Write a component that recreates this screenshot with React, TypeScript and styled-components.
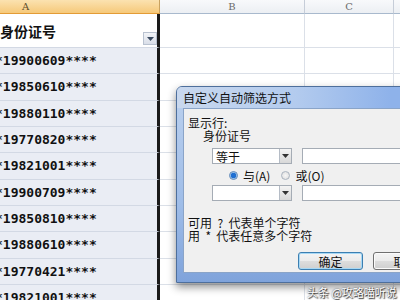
import React from "react";
import styled, { createGlobalStyle } from "styled-components";

const GlobalStyle = createGlobalStyle`
  html, body {
    margin: 0;
    padding: 0;
    background: #ffffff;
    overflow: hidden;
  }
  body {
    width: 400px;
    height: 300px;
    font-family: "Liberation Sans", "Noto Sans CJK SC", sans-serif;
  }
`;

const cjk = `"Noto Sans CJK SC", "Liberation Sans", sans-serif`;

const Page = styled.div`
  position: relative;
  width: 400px;
  height: 300px;
  overflow: hidden;
`;

const Sheet = styled.div`
  display: flex;
  flex-direction: column;
  width: 480px;
`;

const HeaderRow = styled.div`
  display: flex;
  height: 14px;
`;

const ColHeader = styled.div<{ w: number; active?: boolean }>`
  box-sizing: border-box;
  width: ${({ w }) => w}px;
  flex-shrink: 0;
  height: 14px;
  display: flex;
  align-items: center;
  justify-content: ${({ active }) => (active ? "flex-start" : "center")};
  padding-left: ${({ active }) => (active ? "22px" : "0")};
  font-family: "DejaVu Serif", "Liberation Serif", serif;
  font-size: 10px;
  color: ${({ active }) => (active ? "#5a4a2a" : "#6a6a6a")};
  background: ${({ active }) =>
    active
      ? "linear-gradient(#fbe2b0, #f6c97a)"
      : "linear-gradient(#f8f9fb, #eceff3)"};
  border-right: 1px solid ${({ active }) => (active ? "#c9a25f" : "#c6cdd8")};
  border-bottom: 1px solid ${({ active }) => (active ? "#e39b35" : "#a8b9cd")};
`;

const Row = styled.div<{ h: number }>`
  display: flex;
  height: ${({ h }) => h}px;
  flex-shrink: 0;
`;

const IdCell = styled.div<{ head?: boolean }>`
  position: relative;
  box-sizing: border-box;
  width: 160px;
  flex-shrink: 0;
  display: flex;
  align-items: center;
  background: ${({ head }) => (head ? "#ffffff" : "#eaedf4")};
  border-bottom: 1px solid #d3d9e4;
  border-right: 3px solid #1a1a1a;
  white-space: nowrap;
  overflow: hidden;
  font-family: ${({ head }) => (head ? cjk : `"DejaVu Sans Mono", "Liberation Mono", monospace`)};
  font-weight: bold;
  font-size: ${({ head }) => (head ? "14px" : "13px")};
  color: #111;
`;

const IdText = styled.span`
  margin-left: -5px;
`;

const Cell = styled.div<{ w: number }>`
  box-sizing: border-box;
  width: ${({ w }) => w}px;
  flex-shrink: 0;
  background: #ffffff;
  border-bottom: 1px solid #dbe0e8;
  border-right: 1px solid #dbe0e8;
`;

const FilterButton = styled.div`
  position: absolute;
  right: 0;
  bottom: 2px;
  width: 14px;
  height: 13px;
  box-sizing: border-box;
  border: 1px solid #b9c2d0;
  background: linear-gradient(#f2f4f8, #d9dee8);
  display: flex;
  align-items: center;
  justify-content: center;
`;

const Dialog = styled.div`
  position: absolute;
  left: 176px;
  top: 86px;
  width: 240px;
  height: 197px;
  box-sizing: border-box;
  display: flex;
  flex-direction: column;
  border: 1px solid #4e6f9c;
  border-radius: 6px 6px 0 0;
  background: linear-gradient(180deg, #bcd1ee 0%, #9fbde8 60%, #7fa3db 100%);
  box-shadow: 0 4px 8px rgba(0, 0, 0, 0.45);
`;

const TitleBar = styled.div`
  height: 21px;
  display: flex;
  align-items: center;
  padding-left: 6px;
  background: linear-gradient(90deg, #c9d8ee 0%, #b3cbee 50%, #8eb2ea 90%);
  border-radius: 5px 5px 0 0;
  font-family: ${cjk};
  font-size: 12px;
  color: #111;
`;

const HelpButton = styled.div`
  position: absolute;
  right: 0;
  top: -1px;
  width: 15px;
  height: 14px;
  box-sizing: border-box;
  border: 1px solid #6c86a8;
  border-radius: 0 5px 3px 3px;
  background: linear-gradient(#e6edf6, #aebfd6);
  font-family: "Liberation Sans", sans-serif;
  font-size: 11px;
  font-weight: bold;
  color: #2c3e56;
  display: flex;
  align-items: center;
  justify-content: center;
`;

const Body = styled.div`
  flex: 1;
  margin: 0 0 9px 6px;
  box-sizing: border-box;
  background: #f0f0f0;
  border: 1px solid #8aa4c8;
  display: flex;
  flex-direction: column;
  padding: 7px 0 0 4px;
  font-family: ${cjk};
  font-size: 12px;
  color: #111;
`;

const Label = styled.div<{ indent?: number }>`
  height: 13px;
  line-height: 13px;
  padding-left: ${({ indent }) => indent ?? 0}px;
  white-space: pre;
`;

const FieldRow = styled.div<{ top: number }>`
  display: flex;
  align-items: center;
  margin-top: ${({ top }) => top}px;
  padding-left: 24px;
  gap: 10px;
`;

const Combo = styled.div`
  width: 80px;
  height: 16px;
  box-sizing: border-box;
  border: 1px solid #a5acb5;
  background: #fff;
  display: flex;
  align-items: center;
  justify-content: space-between;
  padding-left: 3px;
  font-size: 12px;
`;

const ComboArrow = styled.div`
  width: 12px;
  height: 14px;
  box-sizing: border-box;
  border-left: 1px solid #b5bcc6;
  background: linear-gradient(#f4f4f4, #d8d8d8);
  display: flex;
  align-items: center;
  justify-content: center;
`;

const TextField = styled.div`
  flex: 1;
  height: 16px;
  box-sizing: border-box;
  border: 1px solid #a5acb5;
  border-right: none;
  background: #fff;
`;

const RadioRow = styled.div`
  display: flex;
  align-items: center;
  margin-top: 4px;
  padding-left: 41px;
  height: 14px;
  gap: 3px;
`;

const Radio = styled.span<{ checked?: boolean }>`
  width: 9px;
  height: 9px;
  border-radius: 50%;
  box-sizing: border-box;
  border: 1px solid ${({ checked }) => (checked ? "#5b86b8" : "#a9b3bf")};
  background: ${({ checked }) =>
    checked
      ? "radial-gradient(circle, #1f6fd1 0 2.5px, #8fbbe8 3px, #eef4fb 4px)"
      : "radial-gradient(circle, #f6f6f6, #dcdcdc)"};
  margin-right: 2px;
`;

const RadioText = styled.span`
  margin-right: 8px;
  font-size: 12px;
`;

const Hints = styled.div`
  margin-top: 15px;
  display: flex;
  flex-direction: column;
`;

const ButtonRow = styled.div`
  display: flex;
  gap: 10px;
  margin-top: 10px;
  padding-left: 110px;
`;

const DialogButton = styled.div<{ primary?: boolean }>`
  width: 65px;
  height: 18px;
  box-sizing: border-box;
  border: 1px solid ${({ primary }) => (primary ? "#3c7fb1" : "#707070")};
  border-radius: 3px;
  background: linear-gradient(#f4f4f4 0%, #ebebeb 50%, #dddddd 51%, #cfcfcf 100%);
  box-shadow: ${({ primary }) => (primary ? "inset 0 0 0 1px #a7d8f5" : "inset 0 0 0 1px #fbfbfb")};
  display: flex;
  align-items: center;
  justify-content: center;
  font-size: 12px;
  flex-shrink: 0;
`;

const Watermark = styled.div`
  position: absolute;
  left: 307px;
  top: 284px;
  font-family: ${cjk};
  font-size: 11px;
  color: #ffffff;
  text-shadow: 0 0 2px #333, 1px 1px 1px #333;
  white-space: nowrap;
`;

const DownArrow = ({ color = "#333" }: { color?: string }) => (
  <svg width="7" height="4" viewBox="0 0 7 4">
    <polygon points="0,0 7,0 3.5,4" fill={color} />
  </svg>
);

const ids = [
  "*19900609****",
  "*19850610****",
  "*19880110****",
  "*19770820****",
  "*19821001****",
  "*19900709****",
  "*19850810****",
  "*19880610****",
  "*19770421****",
  "*19821001****",
];

const App = () => {
  return (
    <Page>
      <GlobalStyle />
      <Sheet>
        <HeaderRow>
          <ColHeader w={160} active>A</ColHeader>
          <ColHeader w={145}>B</ColHeader>
          <ColHeader w={89}>C</ColHeader>
          <ColHeader w={90}></ColHeader>
        </HeaderRow>
        <Row h={34}>
          <IdCell head>
            身份证号
            <FilterButton>
              <DownArrow color="#3a4a60" />
            </FilterButton>
          </IdCell>
          <Cell w={145} />
          <Cell w={89} />
          <Cell w={90} />
        </Row>
        {ids.map((id, i) => (
          <Row h={26.33} key={i + "row"}>
            <IdCell>
              <IdText>{id}</IdText>
            </IdCell>
            <Cell w={145} />
            <Cell w={89} />
            <Cell w={90} />
          </Row>
        ))}
      </Sheet>

      <Dialog>
        <TitleBar>自定义自动筛选方式</TitleBar>
        <HelpButton>?</HelpButton>
        <Body>
          <Label>显示行:</Label>
          <Label indent={15}>身份证号</Label>
          <FieldRow top={6}>
            <Combo>
              等于
              <ComboArrow>
                <DownArrow />
              </ComboArrow>
            </Combo>
            <TextField />
          </FieldRow>
          <RadioRow>
            <Radio checked />
            <RadioText>与(A)</RadioText>
            <Radio />
            <RadioText>或(O)</RadioText>
          </RadioRow>
          <FieldRow top={3}>
            <Combo>
              <span />
              <ComboArrow>
                <DownArrow />
              </ComboArrow>
            </Combo>
            <TextField />
          </FieldRow>
          <Hints>
            <Label>可用  ?  代表单个字符</Label>
            <Label>用  *  代表任意多个字符</Label>
          </Hints>
          <ButtonRow>
            <DialogButton primary>确定</DialogButton>
            <DialogButton>取消</DialogButton>
          </ButtonRow>
        </Body>
      </Dialog>
      <Watermark>头条 @攻略喵听说</Watermark>
    </Page>
  );
};

export default App;
